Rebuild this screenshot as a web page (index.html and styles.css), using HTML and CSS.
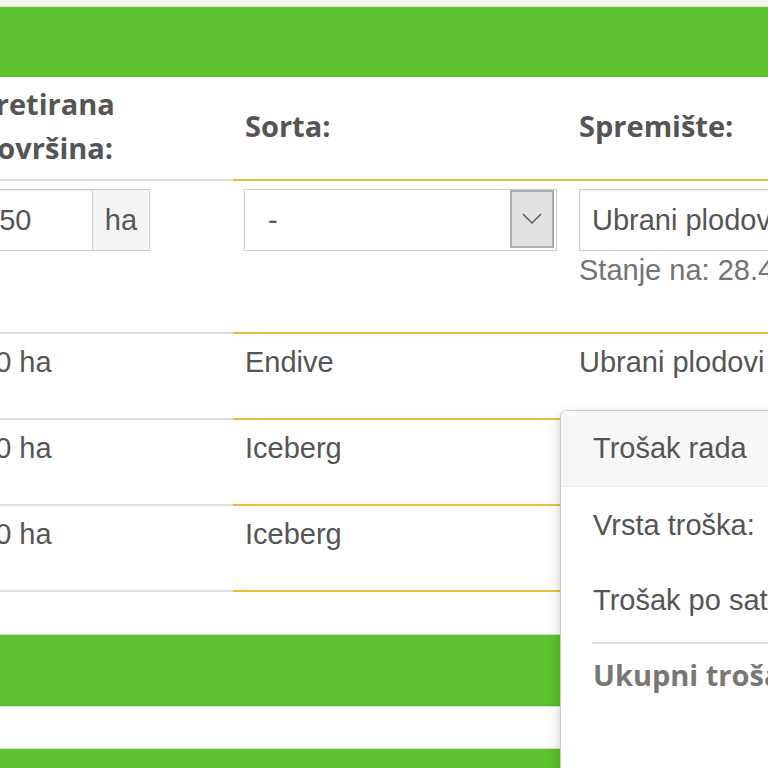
FILE: index.html
```html
<!DOCTYPE html>
<html lang="hr">
<head>
    <meta charset="UTF-8">
    <meta name="viewport" content="width=device-width, initial-scale=1.0">
    <title>Zaštita bilja</title>
    <link rel="stylesheet" href="styles.css">
</head>
<body>
    <div class="page">
        <div class="top-strip"></div>
        <div class="panel-bar"></div>

        <div class="grid-table">
            <div class="trow thead">
                <div class="cell c1">Tretirana<br>površina:</div>
                <div class="cell">Sorta:</div>
                <div class="cell">Spremište:</div>
            </div>

            <div class="trow first">
                <div class="cell c1">
                    <div class="input-group">
                        <div class="form-input">0.50</div>
                        <div class="addon">ha</div>
                    </div>
                </div>
                <div class="cell">
                    <div class="select sorta-select">
                        <span class="select-value">-</span>
                        <span class="select-btn">
                            <svg width="20" height="12" viewBox="0 0 20 12">
                                <polyline points="1,1 10,10 19,1" fill="none" stroke="#555" stroke-width="1.4"/>
                            </svg>
                        </span>
                    </div>
                </div>
                <div class="cell">
                    <div class="select store-select">Ubrani plodovi</div>
                    <div class="help">Stanje na: 28.4.2017.</div>
                </div>
            </div>

            <div class="trow">
                <div class="cell c1">10 ha</div>
                <div class="cell">Endive</div>
                <div class="cell">Ubrani plodovi</div>
            </div>
            <div class="trow">
                <div class="cell c1">10 ha</div>
                <div class="cell">Iceberg</div>
                <div class="cell">Ubrani plodovi</div>
            </div>
            <div class="trow last">
                <div class="cell c1">10 ha</div>
                <div class="cell">Iceberg</div>
                <div class="cell">Ubrani plodovi</div>
            </div>
        </div>

        <div class="panel-bar bottom"></div>
        <div class="spacer"></div>
        <div class="panel-bar"></div>

        <div class="popover">
            <div class="popover-title">Trošak rada</div>
            <div class="popover-body">
                <div class="pop-line">Vrsta troška:</div>
                <div class="pop-line">Trošak po satu:</div>
                <hr>
                <div class="pop-total">Ukupni trošak:</div>
            </div>
        </div>
    </div>
</body>
</html>
```

FILE: styles.css
```css
html, body {
    margin: 0;
    padding: 0;
    overflow: hidden;
    background-color: #fff;
}
body {
    font-family: "Liberation Sans", Arial, sans-serif;
    font-size: 29px;
    color: #555;
}
.page {
    position: relative;
    width: 768px;
    height: 768px;
    overflow: hidden;
}
.top-strip {
    height: 6px;
    background-color: #f4f4f4;
}
.panel-bar {
    height: 71px;
    background-color: #5dc32f;
    border-top: 1px solid #cfe8c2;
    border-bottom: 1px solid #56b42b;
    box-sizing: border-box;
}
.panel-bar.bottom {
    height: 72px;
    box-shadow: 0 1px 0 #e2e2e2;
}
.spacer {
    height: 42px;
}
.grid-table {
    margin-left: -33px;
    width: 1000px;
    margin-bottom: 42px;
}
.trow {
    display: grid;
    grid-template-columns: 266px 334px 400px;
    height: 86px;
}
.cell {
    padding: 8px 12px 0;
    line-height: 40px;
    border-top: 2px solid #e6bf45;
    box-sizing: border-box;
    white-space: nowrap;
}
.cell.c1 {
    border-top-color: #dedede;
}
.trow.thead {
    height: 102px;
}
.trow.thead .cell {
    border-top: none;
    padding: 0 12px 4px;
    display: flex;
    align-items: center;
    font-family: "Open Sans", sans-serif;
    font-weight: 700;
    line-height: 44px;
    color: #555;
}
.trow.first {
    height: 153px;
}
.trow.last {
    height: 88px;
}
.trow.last .cell {
    border-bottom: 2px solid #e6bf45;
}
.trow.last .cell.c1 {
    border-bottom-color: #dedede;
}

/* inputs */
.input-group {
    display: flex;
    margin-left: -17px;
    height: 62px;
}
.form-input {
    width: 131px;
    padding-left: 12px;
    box-sizing: border-box;
    border: 1px solid #ccc;
    line-height: 60px;
    box-shadow: inset 0 1px 1px rgba(0, 0, 0, 0.08);
}
.addon {
    width: 57px;
    box-sizing: border-box;
    border: 1px solid #ccc;
    border-left: none;
    background-color: #f4f4f4;
    line-height: 60px;
    text-align: center;
}
.select {
    height: 62px;
    box-sizing: border-box;
    border: 1px solid #ccc;
    line-height: 60px;
    background-color: #fff;
}
.sorta-select {
    display: flex;
    width: 313px;
    margin-left: -1px;
    padding-left: 23px;
}
.select-btn {
    margin: 0 2px 2px auto;
    width: 44px;
    box-sizing: border-box;
    border: 2px solid #adadad;
    background-color: #e1e1e1;
    display: flex;
    align-items: center;
    justify-content: center;
}
.store-select {
    width: 400px;
    padding-left: 12px;
    box-shadow: inset 0 1px 1px rgba(0, 0, 0, 0.06);
}
.help {
    line-height: 38px;
    color: #737373;
}

/* popover */
.popover {
    position: absolute;
    left: 560px;
    top: 410px;
    width: 340px;
    height: 420px;
    background-color: #fff;
    border: 1px solid rgba(0, 0, 0, 0.2);
    border-radius: 6px;
    box-shadow: 0 5px 12px rgba(0, 0, 0, 0.22);
    white-space: nowrap;
}
.popover-title {
    height: 75px;
    line-height: 75px;
    padding: 0 32px;
    background-color: #f7f7f7;
    border-bottom: 1px solid #ebebeb;
    border-radius: 5px 5px 0 0;
}
.popover-body {
    padding: 18px 32px;
}
.pop-line {
    line-height: 40px;
    margin-bottom: 35px;
}
.pop-line + .pop-line {
    margin-bottom: 0;
}
.popover-body hr {
    margin: 22px 0 11px -1px;
    border: none;
    border-top: 2px solid #ddd;
}
.pop-total {
    line-height: 40px;
    font-family: "Open Sans", sans-serif;
    font-weight: 700;
    color: #777;
}
```
